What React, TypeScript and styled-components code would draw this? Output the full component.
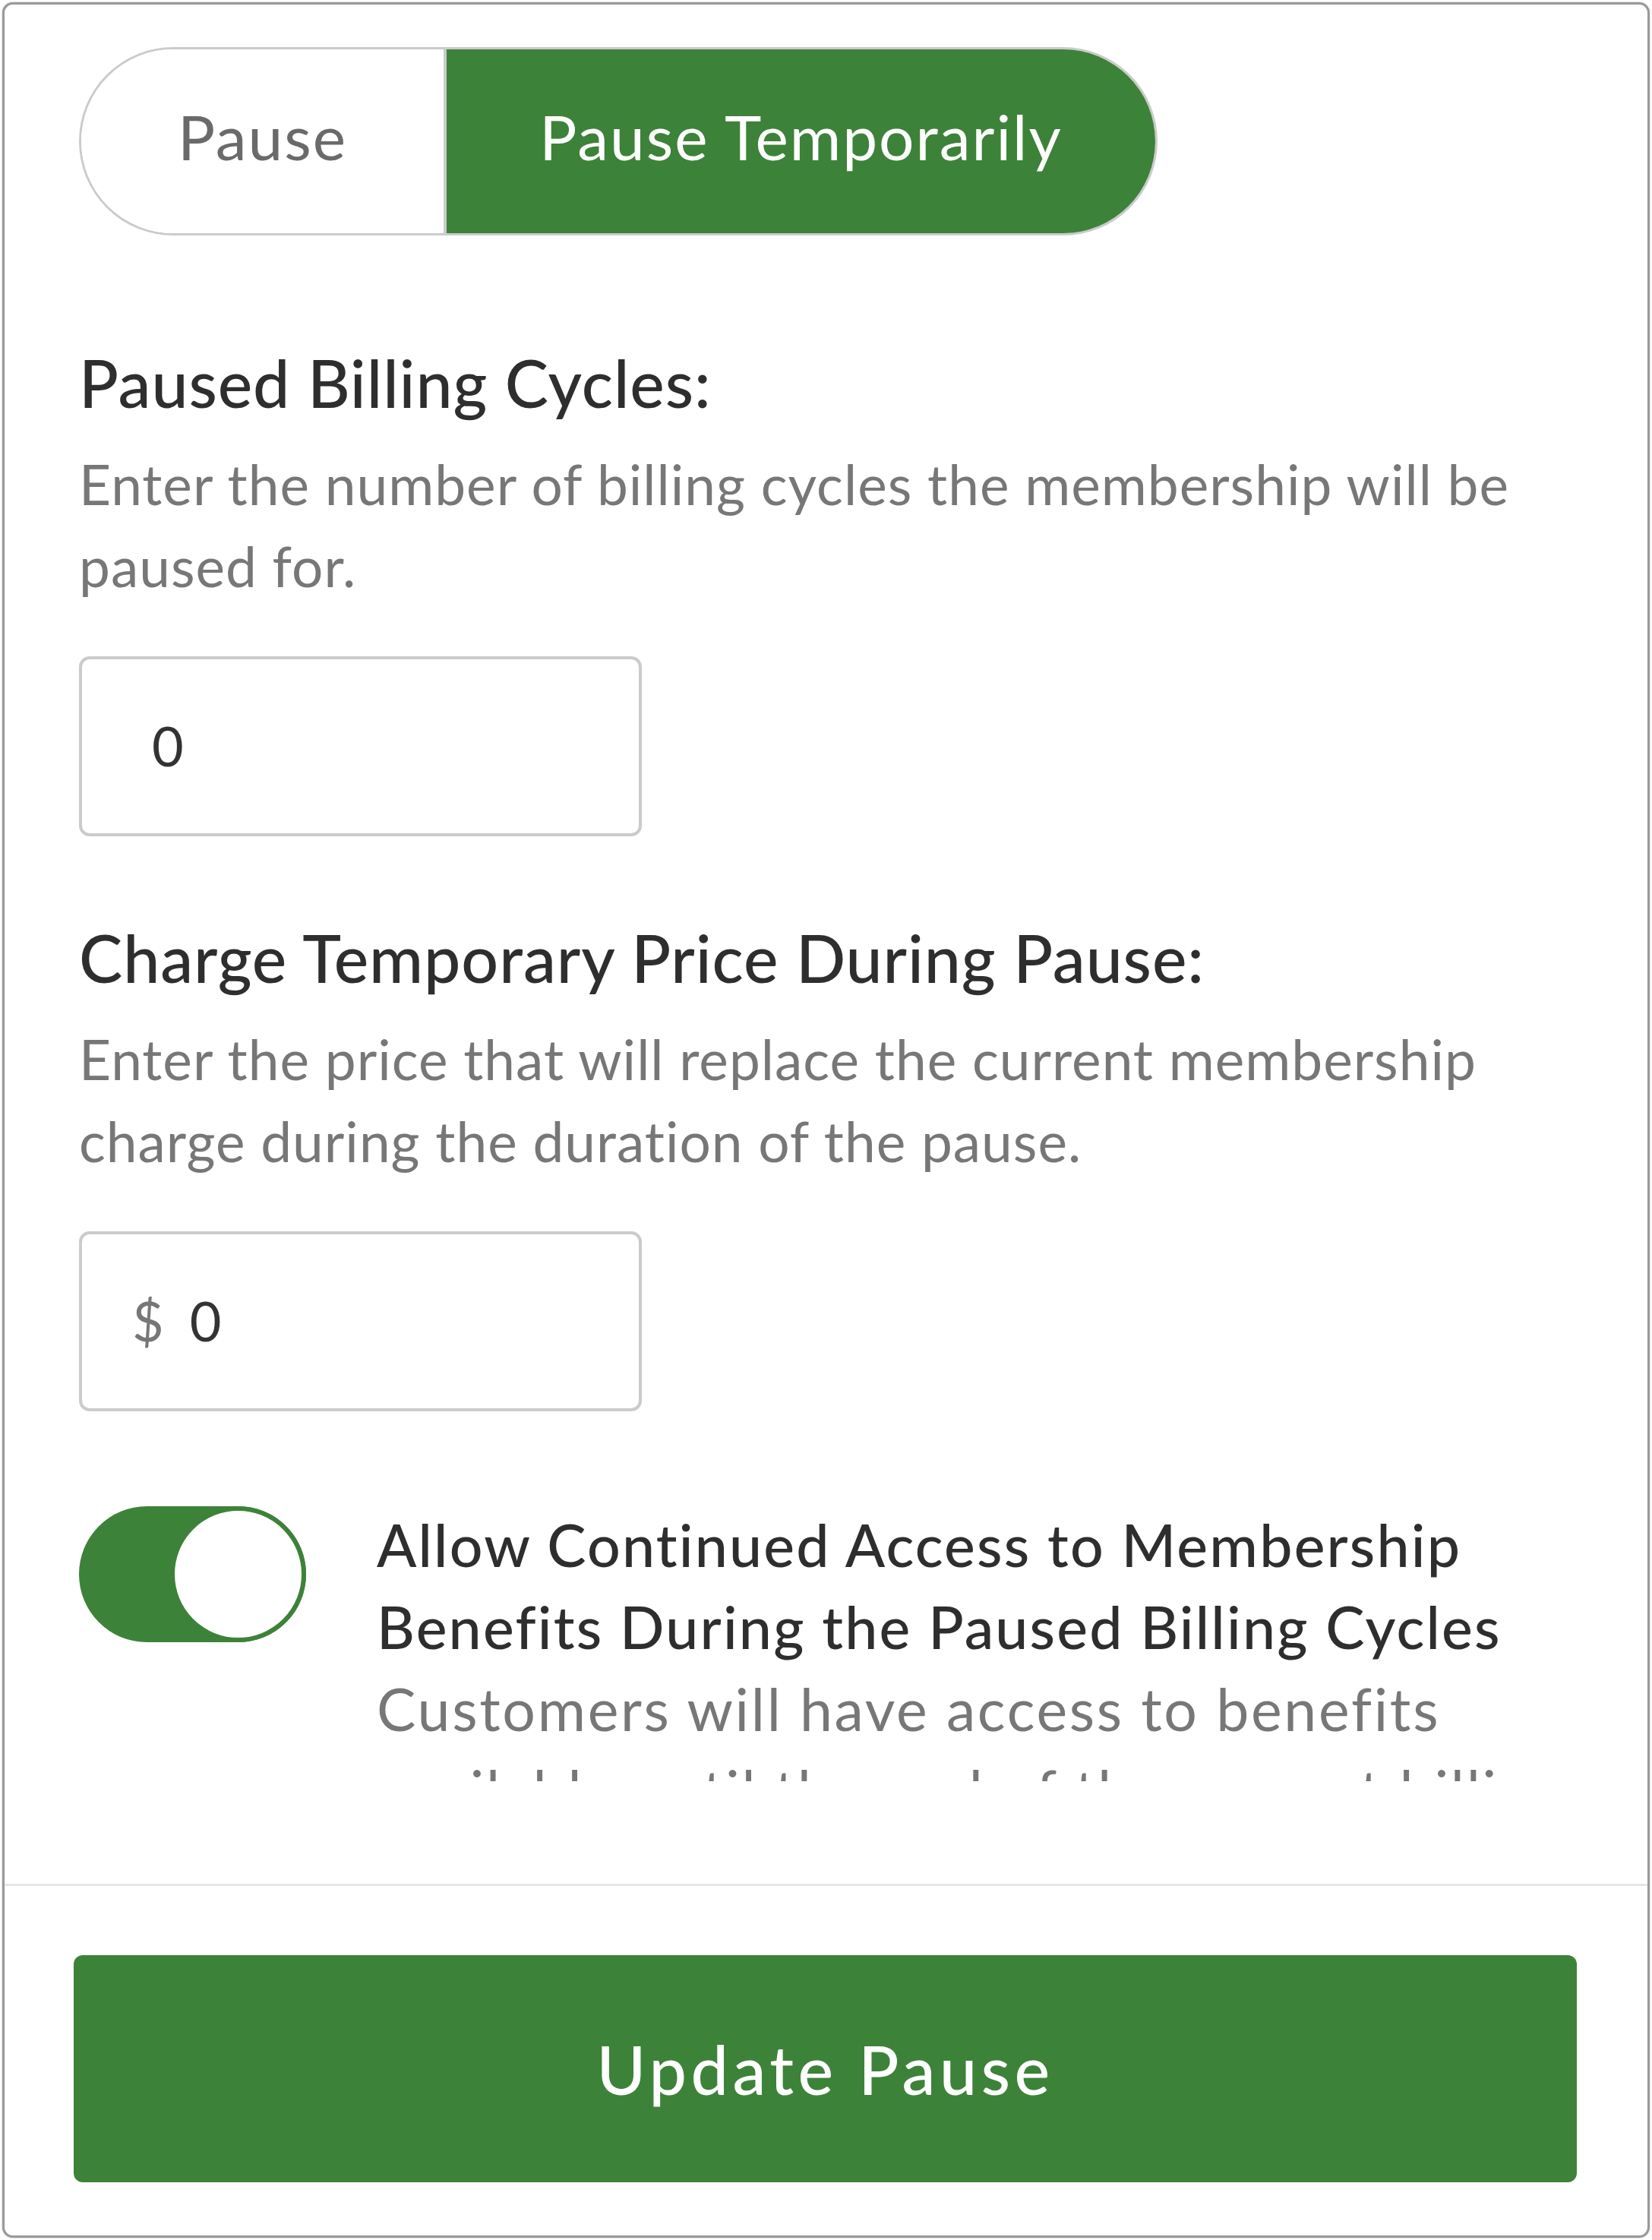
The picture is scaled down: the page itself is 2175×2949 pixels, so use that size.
import React from "react";
import styled, { createGlobalStyle } from "styled-components";

const GREEN = "#3d8239";
const BORDER = "#cbcbcb";

const Global = createGlobalStyle`
  html, body { margin: 0; padding: 0; background: #fff; }
  body {
    font-family: "Lato", "Liberation Sans", sans-serif;
    -webkit-font-smoothing: antialiased;
  }
  *, *::before, *::after { box-sizing: border-box; }
`;

const Page = styled.div`
  height: 100vh;
  padding: 3px;
`;

const Card = styled.div`
  height: 100%;
  display: flex;
  flex-direction: column;
  background: #fff;
  border: 3px solid #9a9a9a;
  border-radius: 14px;
  box-shadow: 0 0 2px rgba(0, 0, 0, 0.35);
  overflow: hidden;
`;

const Body = styled.div`
  flex: 1 1 auto;
  min-height: 0;
  overflow: hidden;
  margin-bottom: 135px;
  padding: 56px 93px 0 98px;
`;

const Segmented = styled.div`
  display: flex;
  width: fit-content;
  height: 248px;
  border: 3px solid ${BORDER};
  border-radius: 124px;
  overflow: hidden;
`;

const Segment = styled.div<{ $active?: boolean; $width: number }>`
  width: ${(p) => p.$width}px;
  display: flex;
  align-items: center;
  justify-content: center;
  padding-bottom: 14px;
  font-size: 82px;
  letter-spacing: 2px;
  color: ${(p) => (p.$active ? "#ffffff" : "#6a6a6a")};
  background: ${(p) => (p.$active ? GREEN : "#ffffff")};
  border-left: ${(p) => (p.$active ? `4px solid ${BORDER}` : "none")};
`;

const Heading = styled.h2<{ $gap: number }>`
  margin: ${(p) => p.$gap}px 0 0;
  font-size: 86px;
  line-height: 1.2;
  font-weight: 500;
  letter-spacing: 0.9px;
  color: #2e2e2e;
`;

const Description = styled.p`
  margin: 28px 0 0;
  font-size: 73px;
  line-height: 108px;
  letter-spacing: 1px;
  color: #777777;
`;

const InputBox = styled.div<{ $pad: number }>`
  margin-top: 65px;
  width: 741px;
  height: 237px;
  display: flex;
  align-items: center;
  padding-left: ${(p) => p.$pad}px;
  padding-bottom: 4px;
  border: 4px solid ${BORDER};
  border-radius: 14px;
  font-size: 72px;
  color: #333333;
`;

const Prefix = styled.span`
  color: #777777;
  margin-right: 34px;
`;

const ToggleRow = styled.div`
  margin-top: 121px;
  display: flex;
  align-items: flex-start;
`;

const Switch = styled.div`
  flex: none;
  margin-top: 4px;
  width: 299px;
  height: 179px;
  border-radius: 90px;
  background: ${GREEN};
  display: flex;
  justify-content: flex-end;
`;

const Knob = styled.div`
  width: 179px;
  height: 179px;
  border-radius: 50%;
  background: #fff;
  border: 6px solid ${GREEN};
`;

const ToggleText = styled.div`
  margin-left: 93px;
  font-size: 77px;
  line-height: 108px;
`;

const ToggleTitle = styled.div`
  color: #2e2e2e;
  font-weight: 500;
  letter-spacing: 2.2px;
`;

const ToggleHint = styled.div`
  color: #777777;
  letter-spacing: 2.7px;
`;

const Footer = styled.div`
  flex: none;
  border-top: 3px solid #e6e6e6;
  padding: 91px 93px 70px 91px;
`;

const PrimaryButton = styled.button`
  display: block;
  width: 100%;
  height: 299px;
  border: none;
  border-radius: 12px;
  background: ${GREEN};
  color: #fff;
  font-family: inherit;
  font-size: 88px;
  font-weight: 500;
  letter-spacing: 5.5px;
  cursor: pointer;
`;

export default function App() {
  return (
    <>
      <Global />
      <Page>
        <Card>
          <Body>
            <Segmented>
              <Segment $width={477}>Pause</Segment>
              <Segment $width={937} $active>
                Pause Temporarily
              </Segment>
            </Segmented>

            <Heading $gap={142}>Paused Billing Cycles:</Heading>
            <Description>
              Enter the number of billing cycles the membership will be paused
              for.
            </Description>
            <InputBox $pad={92}>0</InputBox>

            <Heading $gap={108}>Charge Temporary Price During Pause:</Heading>
            <Description>
              Enter the price that will replace the current membership charge
              during the duration of the pause.
            </Description>
            <InputBox $pad={66}>
              <Prefix>$</Prefix>0
            </InputBox>

            <ToggleRow>
              <Switch>
                <Knob />
              </Switch>
              <ToggleText>
                <ToggleTitle>
                  Allow Continued Access to Membership Benefits During the
                  Paused Billing Cycles
                </ToggleTitle>
                <ToggleHint>
                  Customers will have access to benefits available until the
                  end of the current billing cycle.
                </ToggleHint>
              </ToggleText>
            </ToggleRow>
          </Body>
          <Footer>
            <PrimaryButton>Update Pause</PrimaryButton>
          </Footer>
        </Card>
      </Page>
    </>
  );
}
